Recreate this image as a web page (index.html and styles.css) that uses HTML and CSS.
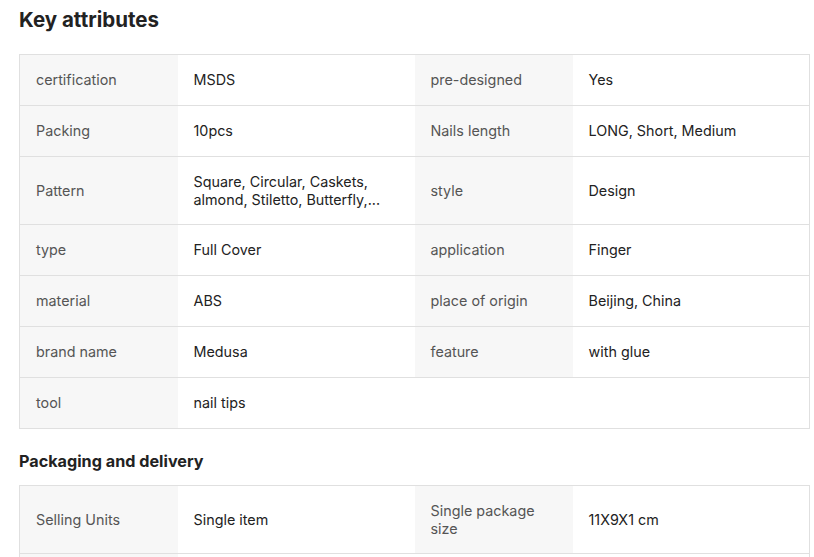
FILE: index.html
```html
<!DOCTYPE html>
<html lang="en">
<head>
<meta charset="utf-8">
<title>Key attributes</title>
<link rel="stylesheet" href="styles.css">
</head>
<body>
<main class="page">
  <h1 class="title">Key attributes</h1>
  <table class="attrs">
    <colgroup><col class="c-label"><col class="c-value"><col class="c-label"><col class="c-value"></colgroup>
    <tr><td class="lbl">certification</td><td class="val">MSDS</td><td class="lbl">pre-designed</td><td class="val">Yes</td></tr>
    <tr><td class="lbl">Packing</td><td class="val">10pcs</td><td class="lbl">Nails length</td><td class="val">LONG, Short, Medium</td></tr>
    <tr><td class="lbl">Pattern</td><td class="val multi">Square, Circular, Caskets, almond, Stiletto, Butterfly,...</td><td class="lbl">style</td><td class="val">Design</td></tr>
    <tr><td class="lbl">type</td><td class="val">Full Cover</td><td class="lbl">application</td><td class="val">Finger</td></tr>
    <tr><td class="lbl">material</td><td class="val">ABS</td><td class="lbl">place of origin</td><td class="val">Beijing, China</td></tr>
    <tr><td class="lbl">brand name</td><td class="val">Medusa</td><td class="lbl">feature</td><td class="val">with glue</td></tr>
    <tr><td class="lbl">tool</td><td class="val">nail tips</td><td class="empty"></td><td class="empty"></td></tr>
  </table>
  <h2 class="subtitle">Packaging and delivery</h2>
  <table class="attrs">
    <colgroup><col class="c-label"><col class="c-value"><col class="c-label"><col class="c-value"></colgroup>
    <tr><td class="lbl">Selling Units</td><td class="val">Single item</td><td class="lbl multi">Single package size</td><td class="val">11X9X1 cm</td></tr>
    <tr><td class="lbl">Single gross weight</td><td class="val">0.100 kg</td><td class="empty"></td><td class="empty"></td></tr>
  </table>
</main>
</body>
</html>
```

FILE: styles.css
```css
html, body {
  margin: 0;
  padding: 0;
  background: #fff;
}
body {
  font-family: Inter, "Liberation Sans", Arial, sans-serif;
  color: #222;
}
.page {
  padding: 6px 4px 0 19px;
}
.title {
  margin: 0 0 20px;
  font-size: 20.5px;
  line-height: 28px;
  font-weight: 700;
  color: #222;
}
.subtitle {
  margin: 20px 0 12px;
  font-size: 16.2px;
  line-height: 24px;
  font-weight: 700;
  color: #222;
}
.attrs {
  width: 791px;
  border-collapse: collapse;
  table-layout: fixed;
  font-size: 14.35px;
  line-height: 17px;
}
.c-label { width: 20%; }
.c-value { width: 30%; }
.attrs td {
  border-top: 1px solid #e0e0e0;
  border-bottom: 1px solid #e0e0e0;
  padding: 16px 16px 17px;
  vertical-align: middle;
}
.attrs td.multi {
  padding-top: 15.5px;
  padding-bottom: 15.5px;
  line-height: 18px;
}
.attrs tr td:first-child { border-left: 1px solid #e0e0e0; }
.attrs tr td:last-child { border-right: 1px solid #e0e0e0; }
.lbl {
  background: #f7f7f7;
  color: #555;
}
.val {
  background: #fff;
  color: #222;
}
.empty { background: #fff; }
```
